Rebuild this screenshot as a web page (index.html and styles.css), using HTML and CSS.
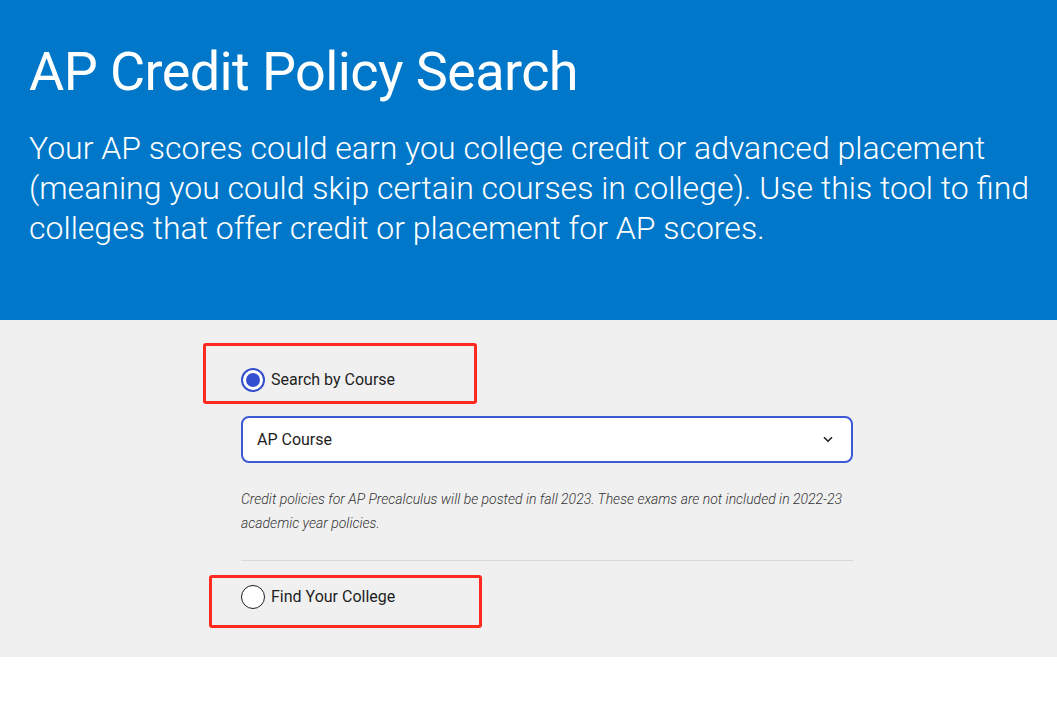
FILE: index.html
```html
<!DOCTYPE html>
<html lang="en">
<head>
<meta charset="utf-8">
<title>AP Credit Policy Search</title>
<link rel="stylesheet" href="styles.css">
</head>
<body>
<header class="hero">
  <h1 class="hero-title">AP Credit Policy Search</h1>
  <p class="hero-text">Your AP scores could earn you college credit or advanced placement (meaning you could skip certain courses in college). Use this tool to find colleges that offer credit or placement for AP scores.</p>
</header>
<section class="search">
  <div class="search-col">
    <label class="radio-row">
      <span class="radio radio-on"><span class="radio-dot"></span></span>
      <span class="radio-label">Search by Course</span>
    </label>
    <div class="select">
      <span class="select-text">AP Course</span>
      <svg class="chevron" width="10" height="7" viewBox="0 0 10 7"><path d="M1 1.2 L5 5.2 L9 1.2" fill="none" stroke="#1e1e1e" stroke-width="1.6"/></svg>
    </div>
    <p class="note">Credit policies for AP Precalculus will be posted in fall 2023. These exams are not included in 2022-23 academic year policies.</p>
    <hr class="divider">
    <label class="radio-row">
      <span class="radio radio-off"></span>
      <span class="radio-label">Find Your College</span>
    </label>
  </div>
  <div class="mark mark-one"></div>
  <div class="mark mark-two"></div>
</section>
<div class="footer-space"></div>
</body>
</html>
```
FILE: styles.css
```css
* { box-sizing: border-box; }
html, body { margin: 0; padding: 0; background: #ffffff; }
body { font-family: Roboto, "Liberation Sans", sans-serif; color: #1e1e1e; }

.hero {
  background: #0077c8;
  color: #ffffff;
  padding: 37px 12px 0 29px;
  height: 320px;
}
.hero-title {
  margin: 0;
  font-size: 54px;
  line-height: 70px;
  font-weight: 400;
  letter-spacing: -0.6px;
}
.hero-text {
  margin: 21px 0 0 0;
  font-size: 32px;
  line-height: 40px;
  font-weight: 300;
}

.search {
  position: relative;
  background: #f0f0f0;
  padding: 48px 0 48px 241px;
  height: 337px;
}
.search-col { width: 612px; }

.radio-row {
  display: flex;
  align-items: center;
  gap: 6px;
  height: 24px;
}
.radio {
  width: 24px;
  height: 24px;
  border-radius: 50%;
  background: #ffffff;
  display: flex;
  align-items: center;
  justify-content: center;
  flex: none;
}
.radio-on { border: 2px solid #3450d0; }
.radio-dot { width: 14px; height: 14px; border-radius: 50%; background: #3450d0; }
.radio-off { border: 1.5px solid #1e1e1e; }
.radio-label { font-size: 16px; line-height: 24px; }

.select {
  margin-top: 24px;
  height: 47px;
  background: #ffffff;
  border: 2px solid #3d5ad6;
  border-radius: 8px;
  display: flex;
  align-items: center;
  justify-content: space-between;
  padding: 0 18px 0 14px;
}
.select-text { font-size: 16px; }
.chevron { display: block; }

.note {
  margin: 24px 0 0 0;
  font-size: 14px;
  line-height: 24px;
  font-style: italic;
  font-weight: 300;
  color: #333333;
}
.divider {
  margin: 25px 0 24px 0;
  border: 0;
  border-top: 1px solid #d9d9d9;
  height: 0;
}

.mark {
  position: absolute;
  border: 3px solid #ff2a1f;
  border-radius: 3px;
}
.mark-one { left: 203px; top: 23px; width: 274px; height: 61px; }
.mark-two { left: 209px; top: 255px; width: 273px; height: 53px; }

.footer-space { height: 53px; }
```
